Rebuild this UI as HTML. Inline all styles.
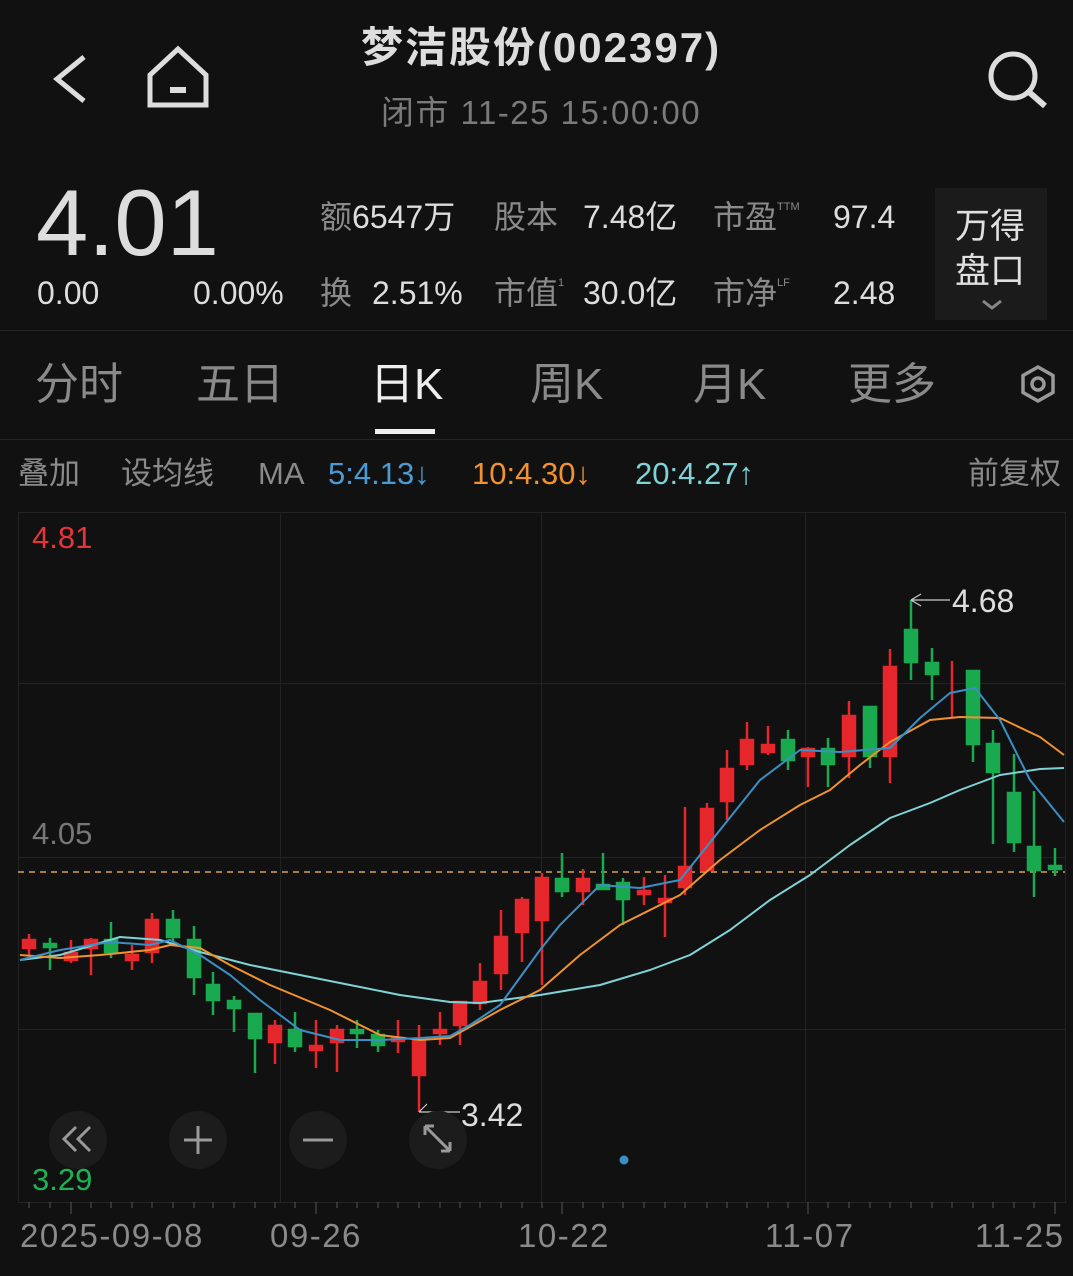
<!DOCTYPE html>
<html><head><meta charset="utf-8"><style>
*{margin:0;padding:0;box-sizing:border-box}
body{width:1073px;height:1276px;background:#111111;overflow:hidden;position:relative;font-family:"Liberation Sans","Noto Sans CJK SC",sans-serif;color:#ddd}
.a{position:absolute;white-space:nowrap;line-height:1}
.g{color:#8a8a8a}
.d{letter-spacing:1.5px}
</style></head><body>
<svg class="a" style="left:0;top:0" width="1073" height="180">
<path d="M84 57 L57 79 L84 101" fill="none" stroke="#ddd" stroke-width="5"/>
<path d="M150 105 V75 L178 49 L206 75 V105 Z" fill="none" stroke="#ddd" stroke-width="5"/>
<rect x="170" y="87" width="16" height="6" fill="#ddd"/>
<circle cx="1013" cy="76" r="22" fill="none" stroke="#ddd" stroke-width="5"/>
<path d="M1029 92 L1045 106" stroke="#ddd" stroke-width="6"/>
</svg>
<div class="a" style="left:0;width:1082px;text-align:center;top:27px;font-size:42px;font-weight:bold;color:#ddd;letter-spacing:2px">梦洁股份(002397)</div>
<div class="a g" style="left:0;width:1082px;text-align:center;top:96px;font-size:33px;color:#7a7a7a;letter-spacing:1.5px">闭市 11-25 15:00:00</div>

<div class="a" style="left:36px;top:176px;font-size:94px;color:#ddd">4.01</div>
<div class="a" style="left:37px;top:277px;font-size:32px">0.00</div>
<div class="a" style="left:193px;top:277px;font-size:32px">0.00%</div>

<div class="a" style="left:320px;top:201px;font-size:32px"><span class="g">额</span>6547万</div>
<div class="a g" style="left:494px;top:201px;font-size:32px">股本</div>
<div class="a" style="left:583px;top:201px;font-size:32px">7.48亿</div>
<div class="a g" style="left:713px;top:201px;font-size:32px">市盈<sup style="font-size:11px;vertical-align:18px">TTM</sup></div>
<div class="a" style="left:833px;top:201px;font-size:32px">97.4</div>
<div class="a g" style="left:320px;top:277px;font-size:32px">换</div>
<div class="a" style="left:372px;top:277px;font-size:32px">2.51%</div>
<div class="a g" style="left:494px;top:277px;font-size:32px">市值<sup style="font-size:11px;vertical-align:18px">1</sup></div>
<div class="a" style="left:583px;top:277px;font-size:32px">30.0亿</div>
<div class="a g" style="left:713px;top:277px;font-size:32px">市净<sup style="font-size:11px;vertical-align:18px">LF</sup></div>
<div class="a" style="left:833px;top:277px;font-size:32px">2.48</div>
<div class="a" style="left:935px;top:188px;width:112px;height:132px;background:#1b1b1b"></div>
<div class="a" style="left:955px;top:204px;font-size:35px;line-height:45px;color:#e0e0e0;white-space:normal;width:76px">万得盘口</div>
<svg class="a" style="left:980px;top:298px" width="24" height="14"><path d="M3 3 L12 10 L21 3" fill="none" stroke="#888" stroke-width="3"/></svg>

<div class="a" style="left:0;top:330px;width:1073px;height:1px;background:#262626"></div>
<div class="a g" style="left:35px;top:363px;font-size:44px;color:#8a8a8a">分时</div>
<div class="a g" style="left:196px;top:363px;font-size:44px;color:#8a8a8a">五日</div>
<div class="a" style="left:370px;top:363px;font-size:44px;color:#eee">日K</div>
<div class="a" style="left:375px;top:429px;width:60px;height:5px;background:#eee"></div>
<div class="a g" style="left:530px;top:363px;font-size:44px;color:#8a8a8a">周K</div>
<div class="a g" style="left:693px;top:363px;font-size:44px;color:#8a8a8a">月K</div>
<div class="a g" style="left:848px;top:363px;font-size:44px;color:#8a8a8a">更多</div>
<svg class="a" style="left:1018px;top:364px" width="40" height="40"><path d="M20 3 L35 11.5 V28.5 L20 37 L5 28.5 V11.5 Z" fill="none" stroke="#999" stroke-width="3.5"/><circle cx="20" cy="20" r="6" fill="none" stroke="#999" stroke-width="3.5"/></svg>
<div class="a" style="left:0;top:439px;width:1073px;height:1px;background:#262626"></div>

<div class="a g" style="left:18px;top:458px;font-size:31px">叠加</div>
<div class="a g" style="left:121px;top:458px;font-size:31px">设均线</div>
<div class="a g" style="left:258px;top:458px;font-size:31px">MA</div>
<div class="a" style="left:328px;top:458px;font-size:31px;color:#4a9bd4">5:4.13↓</div>
<div class="a" style="left:472px;top:458px;font-size:31px;color:#f0922e">10:4.30↓</div>
<div class="a" style="left:635px;top:458px;font-size:31px;color:#7fd3d6">20:4.27↑</div>
<div class="a g" style="left:968px;top:458px;font-size:31px">前复权</div>

<svg class="a" style="left:0;top:0" width="1073" height="1276">
<g stroke="#232323" stroke-width="1" fill="none">
<rect x="18.5" y="512.5" width="1047" height="690"/>
<line x1="18" y1="683.5" x2="1065" y2="683.5"/>
<line x1="18" y1="857.5" x2="1065" y2="857.5"/>
<line x1="18" y1="1029.5" x2="1065" y2="1029.5"/>
<line x1="280.5" y1="512" x2="280.5" y2="1202"/>
<line x1="541.5" y1="512" x2="541.5" y2="1202"/>
<line x1="805.5" y1="512" x2="805.5" y2="1202"/>
</g>
<g stroke="#555" stroke-width="1">
<path d="M29 1202v6M50 1202v6M71 1202v12M91 1202v6M111 1202v6M132 1202v6M152 1202v6M173 1202v6M194 1202v6M213 1202v6M234 1202v6M255 1202v6M275 1202v6M295 1202v6M316 1202v12M337 1202v6M357 1202v6M378 1202v6M398 1202v6M419 1202v6M440 1202v6M460 1202v6M480 1202v6M501 1202v6M522 1202v6M542 1202v6M562 1202v12M583 1202v6M603 1202v6M623 1202v6M644 1202v6M665 1202v6M685 1202v6M707 1202v6M727 1202v6M747 1202v6M768 1202v6M788 1202v6M808 1202v12M828 1202v6M849 1202v6M870 1202v6M890 1202v6M911 1202v6M932 1202v6M952 1202v6M973 1202v6M993 1202v6M1014 1202v6M1034 1202v6M1055 1202v12"/>
</g>
<line x1="18" y1="872" x2="1065" y2="872" stroke="#d9a060" stroke-width="1.5" stroke-dasharray="6 5"/>
<g id="c">
<g fill="#e5262b" stroke="#e5262b" stroke-width="2.5">
<line x1="29" y1="934" x2="29" y2="956"/><rect x="23" y="940" width="12" height="8"/>
<line x1="71" y1="940" x2="71" y2="963"/><rect x="65" y="953" width="12" height="7"/>
<line x1="91" y1="938" x2="91" y2="975"/><rect x="85" y="940" width="12" height="8"/>
<line x1="132" y1="945" x2="132" y2="970"/><rect x="126" y="955" width="12" height="5"/>
<line x1="152" y1="913" x2="152" y2="963"/><rect x="146" y="920" width="12" height="32"/>
<line x1="275" y1="1020" x2="275" y2="1064"/><rect x="269" y="1026" width="12" height="16"/>
<line x1="316" y1="1020" x2="316" y2="1068"/><rect x="310" y="1046" width="12" height="4"/>
<line x1="337" y1="1025" x2="337" y2="1072"/><rect x="331" y="1030" width="12" height="12"/>
<line x1="398" y1="1020" x2="398" y2="1053"/><rect x="392" y="1038" width="12" height="3"/>
<line x1="419" y1="1025" x2="419" y2="1112"/><rect x="413" y="1040" width="12" height="35"/>
<line x1="440" y1="1012" x2="440" y2="1045"/><rect x="434" y="1030" width="12" height="3"/>
<line x1="460" y1="1002" x2="460" y2="1045"/><rect x="454" y="1002" width="12" height="23"/>
<line x1="480" y1="963" x2="480" y2="1010"/><rect x="474" y="982" width="12" height="21"/>
<line x1="501" y1="910" x2="501" y2="990"/><rect x="495" y="937" width="12" height="36"/>
<line x1="522" y1="897" x2="522" y2="962"/><rect x="516" y="900" width="12" height="32"/>
<line x1="542" y1="873" x2="542" y2="985"/><rect x="536" y="878" width="12" height="42"/>
<line x1="583" y1="869" x2="583" y2="905"/><rect x="577" y="879" width="12" height="12"/>
<line x1="644" y1="877" x2="644" y2="905"/><rect x="638" y="891" width="12" height="3"/>
<line x1="665" y1="875" x2="665" y2="937"/><rect x="659" y="899" width="12" height="3"/>
<line x1="685" y1="807" x2="685" y2="895"/><rect x="679" y="867" width="12" height="20"/>
<line x1="707" y1="803" x2="707" y2="872"/><rect x="701" y="809" width="12" height="61"/>
<line x1="727" y1="750" x2="727" y2="820"/><rect x="721" y="769" width="12" height="32"/>
<line x1="747" y1="722" x2="747" y2="770"/><rect x="741" y="740" width="12" height="24"/>
<line x1="768" y1="726" x2="768" y2="755"/><rect x="762" y="745" width="12" height="7"/>
<line x1="808" y1="747" x2="808" y2="787"/><rect x="802" y="749" width="12" height="7"/>
<line x1="849" y1="701" x2="849" y2="778"/><rect x="843" y="716" width="12" height="40"/>
<line x1="890" y1="649" x2="890" y2="783"/><rect x="884" y="667" width="12" height="89"/>
<line x1="952" y1="661" x2="952" y2="717"/>
</g>
<g fill="#19a94f" stroke="#19a94f" stroke-width="2.5">
<line x1="50" y1="938" x2="50" y2="970"/><rect x="44" y="944" width="12" height="3"/>
<line x1="111" y1="922" x2="111" y2="958"/><rect x="105" y="940" width="12" height="12"/>
<line x1="173" y1="910" x2="173" y2="942"/><rect x="167" y="920" width="12" height="17"/>
<line x1="194" y1="926" x2="194" y2="995"/><rect x="188" y="940" width="12" height="37"/>
<line x1="213" y1="972" x2="213" y2="1015"/><rect x="207" y="985" width="12" height="15"/>
<line x1="234" y1="996" x2="234" y2="1032"/><rect x="228" y="1001" width="12" height="7"/>
<line x1="255" y1="1013" x2="255" y2="1073"/><rect x="249" y="1014" width="12" height="24"/>
<line x1="295" y1="1012" x2="295" y2="1052"/><rect x="289" y="1030" width="12" height="16"/>
<line x1="357" y1="1020" x2="357" y2="1048"/><rect x="351" y="1030" width="12" height="3"/>
<line x1="378" y1="1030" x2="378" y2="1052"/><rect x="372" y="1035" width="12" height="10"/>
<line x1="562" y1="853" x2="562" y2="897"/><rect x="556" y="879" width="12" height="12"/>
<line x1="603" y1="853" x2="603" y2="890"/><rect x="597" y="885" width="12" height="4"/>
<line x1="623" y1="878" x2="623" y2="925"/><rect x="617" y="883" width="12" height="16"/>
<line x1="788" y1="730" x2="788" y2="770"/><rect x="782" y="740" width="12" height="20"/>
<line x1="828" y1="738" x2="828" y2="787"/><rect x="822" y="749" width="12" height="15"/>
<line x1="870" y1="707" x2="870" y2="768"/><rect x="864" y="707" width="12" height="49"/>
<line x1="911" y1="600" x2="911" y2="680"/><rect x="905" y="630" width="12" height="32"/>
<line x1="932" y1="648" x2="932" y2="700"/><rect x="926" y="663" width="12" height="11"/>
<line x1="973" y1="670" x2="973" y2="762"/><rect x="967" y="671" width="12" height="73"/>
<line x1="993" y1="730" x2="993" y2="844"/><rect x="987" y="744" width="12" height="28"/>
<line x1="1014" y1="754" x2="1014" y2="852"/><rect x="1008" y="793" width="12" height="49"/>
<line x1="1034" y1="791" x2="1034" y2="897"/><rect x="1028" y="847" width="12" height="23"/>
<line x1="1055" y1="848" x2="1055" y2="876"/><rect x="1049" y="866" width="12" height="3"/>
</g>
</g>
<g fill="none" stroke-width="2" stroke-linejoin="round">
<polyline stroke="#7fd3d6" points="20,960 60,955 120,937 160,940 200,952 250,965 300,975 350,985 400,995 450,1002 480,1003 540,995 600,985 650,970 690,955 730,930 770,900 810,875 850,845 890,818 930,803 960,790 1000,775 1040,769 1064,768"/>
<polyline stroke="#f0922e" points="20,955 60,958 100,955 150,950 170,945 200,948 230,965 270,985 330,1010 380,1035 420,1040 450,1038 500,1010 540,990 580,955 620,925 680,895 720,860 760,830 800,805 830,790 860,765 890,742 930,720 960,717 1000,718 1040,737 1064,755"/>
<polyline stroke="#3b8fc4" points="20,960 60,950 110,942 150,945 170,940 200,955 230,975 260,1000 300,1030 340,1040 380,1040 420,1038 450,1036 470,1025 500,1005 540,950 560,925 600,885 640,888 680,880 720,830 760,780 800,750 840,752 890,748 920,718 950,693 975,688 1000,720 1030,780 1064,822"/>
</g>
<g stroke="#ccc" stroke-width="1.2" fill="none">
<path d="M911 600 H950 M911 600 l10 -6 M911 600 l10 6"/>
<path d="M419 1112 H460 M419 1112 l8 -8"/>
</g>
<g fill="#1c1c1c"><circle cx="78" cy="1140" r="29"/><circle cx="198" cy="1140" r="29"/><circle cx="318" cy="1140" r="29"/><circle cx="438" cy="1140" r="29"/></g>
<g stroke="#999" stroke-width="3" fill="none">
<path d="M76 1127 L64 1139 L76 1151 M90 1127 L78 1139 L90 1151"/>
<path d="M198 1126 V1154 M184 1140 H212"/>
<path d="M303 1140 H333"/>
<path d="M425 1126 L450 1151 M425 1126 v9 M425 1126 h9 M450 1151 v-9 M450 1151 h-9"/>
</g>
<circle cx="624" cy="1160" r="4.5" fill="#3b8fc4"/>
</svg>
<div class="a" style="left:32px;top:522px;font-size:31px;color:#e5343a">4.81</div>
<div class="a g" style="left:32px;top:818px;font-size:31px;color:#777">4.05</div>
<div class="a" style="left:32px;top:1164px;font-size:31px;color:#1fb255">3.29</div>
<div class="a" style="left:952px;top:585px;font-size:32px;color:#ddd">4.68</div>
<div class="a" style="left:461px;top:1099px;font-size:32px;color:#ddd">3.42</div>
<div class="a g d" style="left:20px;top:1219px;font-size:33px;color:#8a8a8a">2025-09-08</div>
<div class="a g d" style="left:270px;top:1219px;font-size:33px;color:#8a8a8a">09-26</div>
<div class="a g d" style="left:518px;top:1219px;font-size:33px;color:#8a8a8a">10-22</div>
<div class="a g d" style="left:765px;top:1219px;font-size:33px;color:#8a8a8a">11-07</div>
<div class="a g d" style="left:975px;top:1219px;font-size:33px;color:#8a8a8a">11-25</div>
</body></html>
